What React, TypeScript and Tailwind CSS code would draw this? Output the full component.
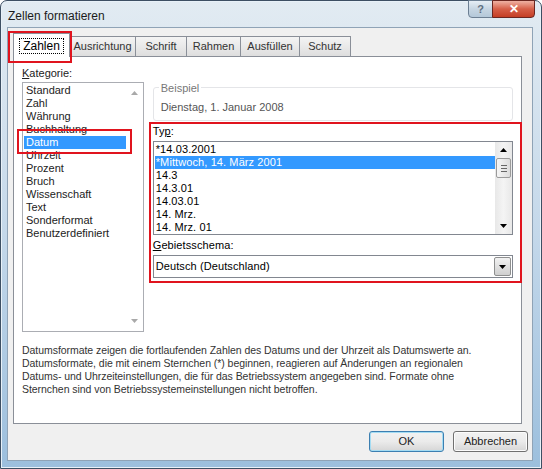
import React from "react";

// ---- data ----
const CATEGORIES = [
  "Standard",
  "Zahl",
  "Währung",
  "Buchhaltung",
  "Datum",
  "Uhrzeit",
  "Prozent",
  "Bruch",
  "Wissenschaft",
  "Text",
  "Sonderformat",
  "Benutzerdefiniert",
];

const TYPES = [
  "*14.03.2001",
  "*Mittwoch, 14. März 2001",
  "14.3",
  "14.3.01",
  "14.03.01",
  "14. Mrz.",
  "14. Mrz. 01",
];

// ---- small drawings ----
function Arrow({ dir, color = "#000" }: { dir: "up" | "down"; color?: string }) {
  return (
    <svg width="7" height="4" viewBox="0 0 7 4">
      {dir === "up" ? (
        <path d="M0 4 L3.5 0 L7 4 Z" fill={color} />
      ) : (
        <path d="M0 0 L7 0 L3.5 4 Z" fill={color} />
      )}
    </svg>
  );
}

function Tab({ label, w }: { label: string; w: string }) {
  return (
    <div
      className={`${w} h-[20px] -ml-px flex items-center justify-center border border-b-0 border-[#8a8f98] bg-gradient-to-b from-[#f4f4f4] to-[#dedede] text-[11px] text-[#333]`}
    >
      {label}
    </div>
  );
}

// ---- main ----
export default function App() {
  return (
    <div className="w-[542px] h-[469px] overflow-hidden bg-white font-['Liberation_Sans',Arial,sans-serif]">
      {/* window frame */}
      <div className="w-[542px] h-[469px] flex flex-col rounded-t-[7px] border border-[#3d4f63] bg-gradient-to-b from-[#e2ebf2] via-[#c4d8ea] to-[#9cbfdd] shadow-[inset_0_0_0_1px_#e8f1f8]">
        {/* title bar */}
        <div className="h-[26px] flex items-start justify-between">
          <span className="pl-[7px] pt-[6px] text-[12px] text-[#1b1b1b]">Zellen formatieren</span>
          <div className="flex mr-[6px] -mt-px">
            <div className="w-[25px] h-[18px] flex items-center justify-center rounded-bl-[4px] border border-[#6c7f93] bg-gradient-to-b from-[#e6eef5] via-[#c6d5e2] to-[#b4c8d9] text-[11px] font-bold text-[#5f6f80]">
              ?
            </div>
            <div className="w-[43px] h-[18px] -ml-px flex items-center justify-center rounded-br-[4px] border border-[#6b2620] bg-gradient-to-b from-[#eeb1a3] via-[#d65f48] to-[#c43d24] text-[12px] font-bold text-white">
              ✕
            </div>
          </div>
        </div>

        {/* client area */}
        <div className="relative ml-[6px] mr-[8px] h-[434px] border border-[#8fa3b6] bg-[#f0f0f0]">
          {/* tab strip */}
          <div className="flex items-end pl-[5px] pt-[4px] h-[28px]">
            <div className="relative z-10 w-[57px] h-[24px] -mb-px flex items-center justify-center border border-b-0 border-[#8a8f98] bg-white">
              <span className="px-[3px] leading-[14px] border border-dotted border-black text-[12px] text-black">
                Zahlen
              </span>
            </div>
            <Tab label="Ausrichtung" w="w-[67px]" />
            <Tab label="Schrift" w="w-[52px]" />
            <Tab label="Rahmen" w="w-[55px]" />
            <Tab label="Ausfüllen" w="w-[60px]" />
            <Tab label="Schutz" w="w-[52px]" />
          </div>

          {/* tab page */}
          <div className="ml-[5px] w-[509px] h-[368px] border border-[#8a8f98] bg-white px-[8px] pt-[9px]">
            <div className="flex gap-[9px]">
              {/* category column */}
              <div className="w-[123px] flex flex-col">
                <span className="text-[11px] leading-[15px] text-[#222]">
                  <u>K</u>ategorie:
                </span>
                <div className="mt-[1px] h-[250px] flex border border-[#abadb3] bg-white">
                  <div className="flex-1 pt-[1px] pl-[1px]">
                    {CATEGORIES.map((c) => (
                      <div
                        key={c}
                        className={`h-[13px] leading-[13px] pl-[2px] text-[11px] ${
                          c === "Datum" ? "bg-[#3399ff] text-white" : "text-[#222]"
                        }`}
                      >
                        {c}
                      </div>
                    ))}
                  </div>
                  <div className="w-[17px] flex flex-col items-center justify-between py-[8px]">
                    <Arrow dir="up" color="#a9a9a9" />
                    <Arrow dir="down" color="#a9a9a9" />
                  </div>
                </div>
              </div>

              {/* format column */}
              <div className="w-[364px] flex flex-col pt-[21px]">
                {/* Beispiel group */}
                <div className="relative h-[34px] border border-[#e4e5e8] rounded-[3px] px-[7px]">
                  <span className="absolute -top-[6px] left-[5px] bg-white px-[2px] text-[11px] leading-[13px] text-[#777]">
                    Beispiel
                  </span>
                  <div className="pt-[12px] text-[11px] leading-[14px] text-[#555]">Dienstag, 1. Januar 2008</div>
                </div>

                <span className="mt-[3px] text-[11px] tracking-[0.1px] leading-[15px] text-black">
                  Ty<u>p</u>:
                </span>
                <div className="mt-[2px] h-[94px] flex border border-[#828790] bg-white">
                  <div className="flex-1 pt-[1px] pl-[1px]">
                    {TYPES.map((t, i) => (
                      <div
                        key={t}
                        className={`h-[13px] leading-[13px] pl-[1px] text-[11px] tracking-[0.1px] ${
                          i === 1 ? "bg-[#3399ff] text-white" : "text-black"
                        }`}
                      >
                        {t}
                      </div>
                    ))}
                  </div>
                  {/* scrollbar */}
                  <div className="w-[17px] flex flex-col items-center bg-gradient-to-r from-[#e8e8e8] via-[#f4f4f4] to-[#e8e8e8]">
                    <div className="h-[16px] flex items-center justify-center">
                      <Arrow dir="up" />
                    </div>
                    <div className="w-[15px] h-[20px] flex flex-col items-center justify-center gap-[2px] rounded-[2px] border border-[#9b9b9b] bg-gradient-to-r from-[#f6f6f6] to-[#dcdcdc]">
                      <div className="w-[6px] h-px bg-[#666]" />
                      <div className="w-[6px] h-px bg-[#666]" />
                      <div className="w-[6px] h-px bg-[#666]" />
                    </div>
                    <div className="flex-1" />
                    <div className="h-[16px] flex items-center justify-center">
                      <Arrow dir="down" />
                    </div>
                  </div>
                </div>

                <span className="mt-[3px] text-[11px] tracking-[0.1px] leading-[15px] text-black">
                  <u>G</u>ebietsschema:
                </span>
                <div className="mt-[2px] h-[23px] flex items-center border border-[#828790] bg-white">
                  <span className="flex-1 pl-[2px] text-[11px] tracking-[0.1px] text-black">Deutsch (Deutschland)</span>
                  <div className="w-[17px] h-[19px] mr-px flex items-center justify-center rounded-[2px] border border-[#8e8f8f] bg-gradient-to-b from-[#f2f2f2] to-[#cfcfcf]">
                    <Arrow dir="down" />
                  </div>
                </div>
              </div>
            </div>

            {/* description */}
            <p className="mt-[12px] w-[490px] whitespace-nowrap text-[10.5px] tracking-[-0.05px] leading-[13px] text-[#333]">
              Datumsformate zeigen die fortlaufenden Zahlen des Datums und der Uhrzeit als Datumswerte an.
              <br />
              Datumsformate, die mit einem Sternchen (*) beginnen, reagieren auf Änderungen an regionalen
              <br />
              Datums- und Uhrzeiteinstellungen, die für das Betriebssystem angegeben sind. Formate ohne
              <br />
              Sternchen sind von Betriebssystemeinstellungen nicht betroffen.
            </p>
          </div>

          {/* buttons */}
          <div className="flex justify-end gap-[9px] pr-[4px] pt-[7px]">
            <button className="w-[75px] h-[21px] rounded-[3px] border border-[#3c7fb1] bg-gradient-to-b from-[#f2f2f2] via-[#ebebeb] to-[#d6d6d6] shadow-[inset_0_0_0_1px_#a4dcf3] text-[11px] text-[#222]">
              OK
            </button>
            <button className="w-[75px] h-[21px] rounded-[3px] border border-[#707070] bg-gradient-to-b from-[#f2f2f2] via-[#ebebeb] to-[#d6d6d6] shadow-[inset_0_0_0_1px_#fcfcfc] text-[11px] text-[#222]">
              Abbrechen
            </button>
          </div>

          {/* red callouts */}
          <div className="absolute left-[0px] top-[3px] w-[64px] h-[32px] border-2 border-[#e0141e] pointer-events-none" />
          <div className="absolute left-[9px] top-[101px] w-[115px] h-[25px] border-2 border-[#e0141e] pointer-events-none" />
          <div className="absolute left-[141px] top-[94px] w-[373px] h-[161px] border-2 border-[#e0141e] pointer-events-none" />
        </div>
      </div>
    </div>
  );
}
